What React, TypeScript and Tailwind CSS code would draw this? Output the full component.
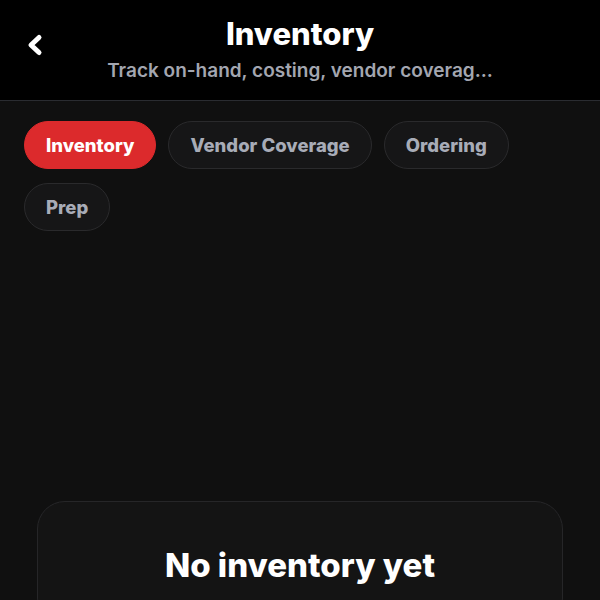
import { useState } from "react";

const tabs = ["Inventory", "Vendor Coverage", "Ordering", "Prep"];

export default function App() {
  const [active, setActive] = useState("Inventory");

  return (
    <div className="min-h-[600px] w-[600px] overflow-hidden bg-[#101010] font-['Inter',sans-serif]">
      {/* Header */}
      <header className="relative flex h-[101px] flex-col items-center border-b border-[#2a2c31] bg-black pt-[14px]">
        <button className="absolute left-[24px] top-[32px] flex h-[26px] w-[22px] items-center justify-center">
          <svg width="20" height="24" viewBox="0 0 20 24" fill="none">
            <path d="M14 4.5 L6 12 L14 19.5" stroke="white" strokeWidth="5" strokeLinecap="round" strokeLinejoin="round" />
          </svg>
        </button>
        <h1 className="text-[31px] font-extrabold leading-[40px] text-white">Inventory</h1>
        <p className="mt-[5px] text-[19px] font-semibold leading-[24px] text-[#a3a6b0]">
          Track on-hand, costing, vendor coverag...
        </p>
      </header>

      {/* Tabs */}
      <nav className="flex flex-wrap gap-x-[12px] gap-y-[14px] px-[24px] pt-[20px]">
        {tabs.map((t) => (
          <button
            key={t}
            onClick={() => setActive(t)}
            className={`h-[48px] rounded-full px-[21px] pt-[1px] text-[18.5px] font-extrabold ${
              active === t
                ? "border border-[#dc2a2c] bg-[#dc2a2c] text-white"
                : "border border-[#2a2a2c] bg-[#161617] text-[#a8acb7]"
            }`}
          >
            {t}
          </button>
        ))}
      </nav>

      {/* Empty state */}
      <section className="mx-[37px] mt-[270px] rounded-[28px] border border-[#262628] bg-[#141414] px-6 pb-10 pt-[43px]">
        <h2 className="text-center text-[33px] font-extrabold leading-[40px] text-white">
          No inventory yet
        </h2>
      </section>
    </div>
  );
}
